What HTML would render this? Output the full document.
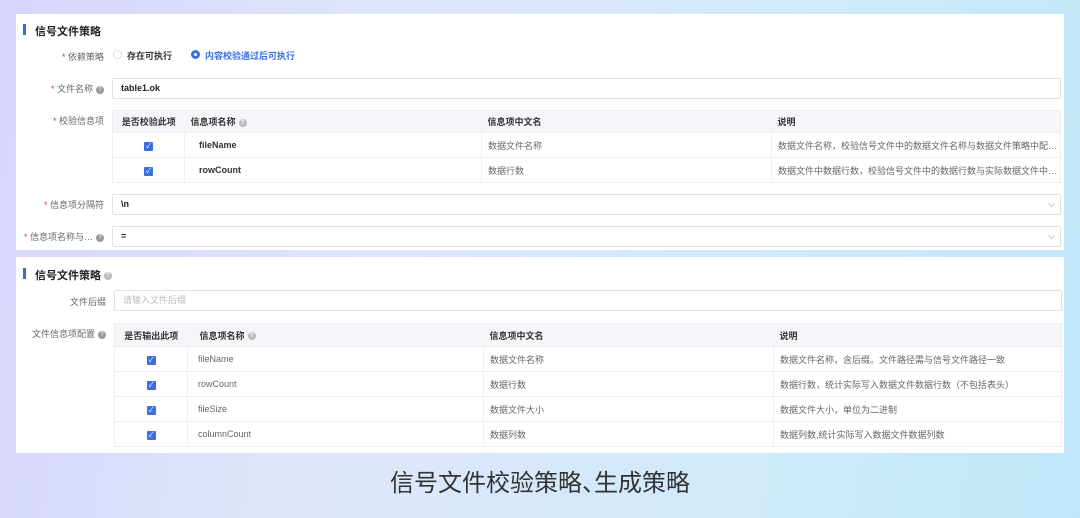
<!DOCTYPE html>
<html><head><meta charset="utf-8"><style>
*{box-sizing:border-box;margin:0;padding:0}
body{width:1080px;height:518px;overflow:hidden;font-family:"Liberation Sans","Noto Sans CJK SC",sans-serif;background:linear-gradient(100deg,#d6d5fb 0%,#dfe6fb 35%,#cfeafb 70%,#bfe7fa 100%);position:relative}
.panel{position:absolute;left:16px;width:1048px;background:#fff}
.abs{position:absolute}
.title{font-size:11px;font-weight:bold;color:#222;left:19px}
.bar{position:absolute;left:7px;width:3px;height:11px;background:#3a6fd8}
.lbl{position:absolute;font-size:9px;color:#666;text-align:right}
.lbl b{color:#e33;font-weight:normal}
.q{display:inline-block;width:8px;height:8px;border-radius:50%;background:#999;color:#fff;font-size:6px;line-height:8px;text-align:center;vertical-align:middle;margin-left:3px}
.inp{position:absolute;border:1px solid #dde1e8;border-radius:2px;height:21px;font-size:9px;line-height:19px;padding-left:8px;color:#222}
.chev{position:absolute;right:6px;top:6px;width:5px;height:5px;border-right:1px solid #ccc;border-bottom:1px solid #ccc;transform:rotate(45deg)}
table{position:absolute;border-collapse:collapse;font-size:9px;color:#333;border:1px solid #eceef2}
td,th{border-bottom:1px solid #eceef2;padding:0 6px;text-align:left;white-space:nowrap;overflow:hidden}
th{background:#f4f6fa;font-weight:bold;color:#333}
td+td{border-left:1px solid #f0f1f4}
.cb{display:inline-block;width:9px;height:9px;background:#3b6fe0;border-radius:1px;color:#fff;font-size:7px;line-height:9px;text-align:center}
.c{text-align:center}
.g{color:#666}
</style></head><body>
<div class="panel" style="top:14px;height:236px">
  <div class="bar" style="top:10px"></div>
  <div class="abs title" style="top:9px">信号文件策略</div>
  <div class="lbl" style="left:0;width:88px;top:36px"><b>* </b>依赖策略</div>
  <div class="abs" style="left:97px;top:36px;width:9px;height:9px;border:1px solid #ddd;border-radius:50%"></div>
  <div class="abs" style="left:111px;top:35px;font-size:9px;font-weight:bold;color:#333">存在可执行</div>
  <div class="abs" style="left:175px;top:36px;width:9px;height:9px;border:3px solid #3b6fe0;border-radius:50%"></div>
  <div class="abs" style="left:189px;top:35px;font-size:9px;font-weight:bold;color:#3b6fe0">内容校验通过后可执行</div>
  <div class="lbl" style="left:0;width:88px;top:68px"><b>* </b>文件名称<span class="q">?</span></div>
  <div class="inp" style="left:96px;top:64px;width:949px;font-weight:bold">table1.ok</div>
  <div class="lbl" style="left:0;width:88px;top:100px"><b>* </b>校验信息项</div>
  <table style="left:96px;top:96px;width:949px;table-layout:fixed">
    <colgroup><col style="width:72px"><col style="width:297px"><col style="width:290px"><col></colgroup>
    <tr style="height:22px"><th class="c">是否校验此项</th><th>信息项名称<span class="q" style="background:#bbb">?</span></th><th>信息项中文名</th><th>说明</th></tr>
    <tr style="height:25px"><td class="c"><span class="cb">✓</span></td><td style="font-weight:bold;padding-left:14px">fileName</td><td class="g">数据文件名称</td><td class="g">数据文件名称，校验信号文件中的数据文件名称与数据文件策略中配…</td></tr>
    <tr style="height:25px"><td class="c"><span class="cb">✓</span></td><td style="font-weight:bold;padding-left:14px">rowCount</td><td class="g">数据行数</td><td class="g">数据文件中数据行数，校验信号文件中的数据行数与实际数据文件中…</td></tr>
  </table>
  <div class="lbl" style="left:0;width:88px;top:184px"><b>* </b>信息项分隔符</div>
  <div class="inp" style="left:96px;top:180px;width:949px;font-weight:bold">\n<span class="chev"></span></div>
  <div class="lbl" style="left:0;width:88px;top:216px"><b>* </b>信息项名称与…<span class="q">?</span></div>
  <div class="inp" style="left:96px;top:212px;width:949px;font-weight:bold">=<span class="chev"></span></div>
</div>
<div class="panel" style="top:257px;height:196px">
  <div class="bar" style="top:11px"></div>
  <div class="abs title" style="top:10px">信号文件策略<span class="q" style="background:#bbb">?</span></div>
  <div class="lbl" style="left:0;width:90px;top:38px">文件后缀</div>
  <div class="inp" style="left:98px;top:33px;width:948px;color:#bbb">请输入文件后缀</div>
  <div class="lbl" style="left:0;width:90px;top:70px">文件信息项配置<span class="q">?</span></div>
  <table style="left:98px;top:66px;width:948px;table-layout:fixed">
    <colgroup><col style="width:73px"><col style="width:296px"><col style="width:290px"><col></colgroup>
    <tr style="height:23px"><th class="c">是否输出此项</th><th style="padding-left:12px">信息项名称<span class="q" style="background:#bbb">?</span></th><th>信息项中文名</th><th>说明</th></tr>
    <tr style="height:25px"><td class="c"><span class="cb">✓</span></td><td class="g" style="padding-left:10px">fileName</td><td class="g">数据文件名称</td><td class="g">数据文件名称，含后缀。文件路径需与信号文件路径一致</td></tr>
    <tr style="height:25px"><td class="c"><span class="cb">✓</span></td><td class="g" style="padding-left:10px">rowCount</td><td class="g">数据行数</td><td class="g">数据行数，统计实际写入数据文件数据行数（不包括表头）</td></tr>
    <tr style="height:25px"><td class="c"><span class="cb">✓</span></td><td class="g" style="padding-left:10px">fileSize</td><td class="g">数据文件大小</td><td class="g">数据文件大小，单位为二进制</td></tr>
    <tr style="height:25px"><td class="c"><span class="cb">✓</span></td><td class="g" style="padding-left:10px">columnCount</td><td class="g">数据列数</td><td class="g">数据列数,统计实际写入数据文件数据列数</td></tr>
  </table>
</div>
<div class="abs" style="left:0;width:1080px;top:469px;text-align:center;font-size:24px;line-height:30px;color:#333">信号文件校验策略<span style="letter-spacing:-12px">、</span>生成策略</div>
</body></html>
